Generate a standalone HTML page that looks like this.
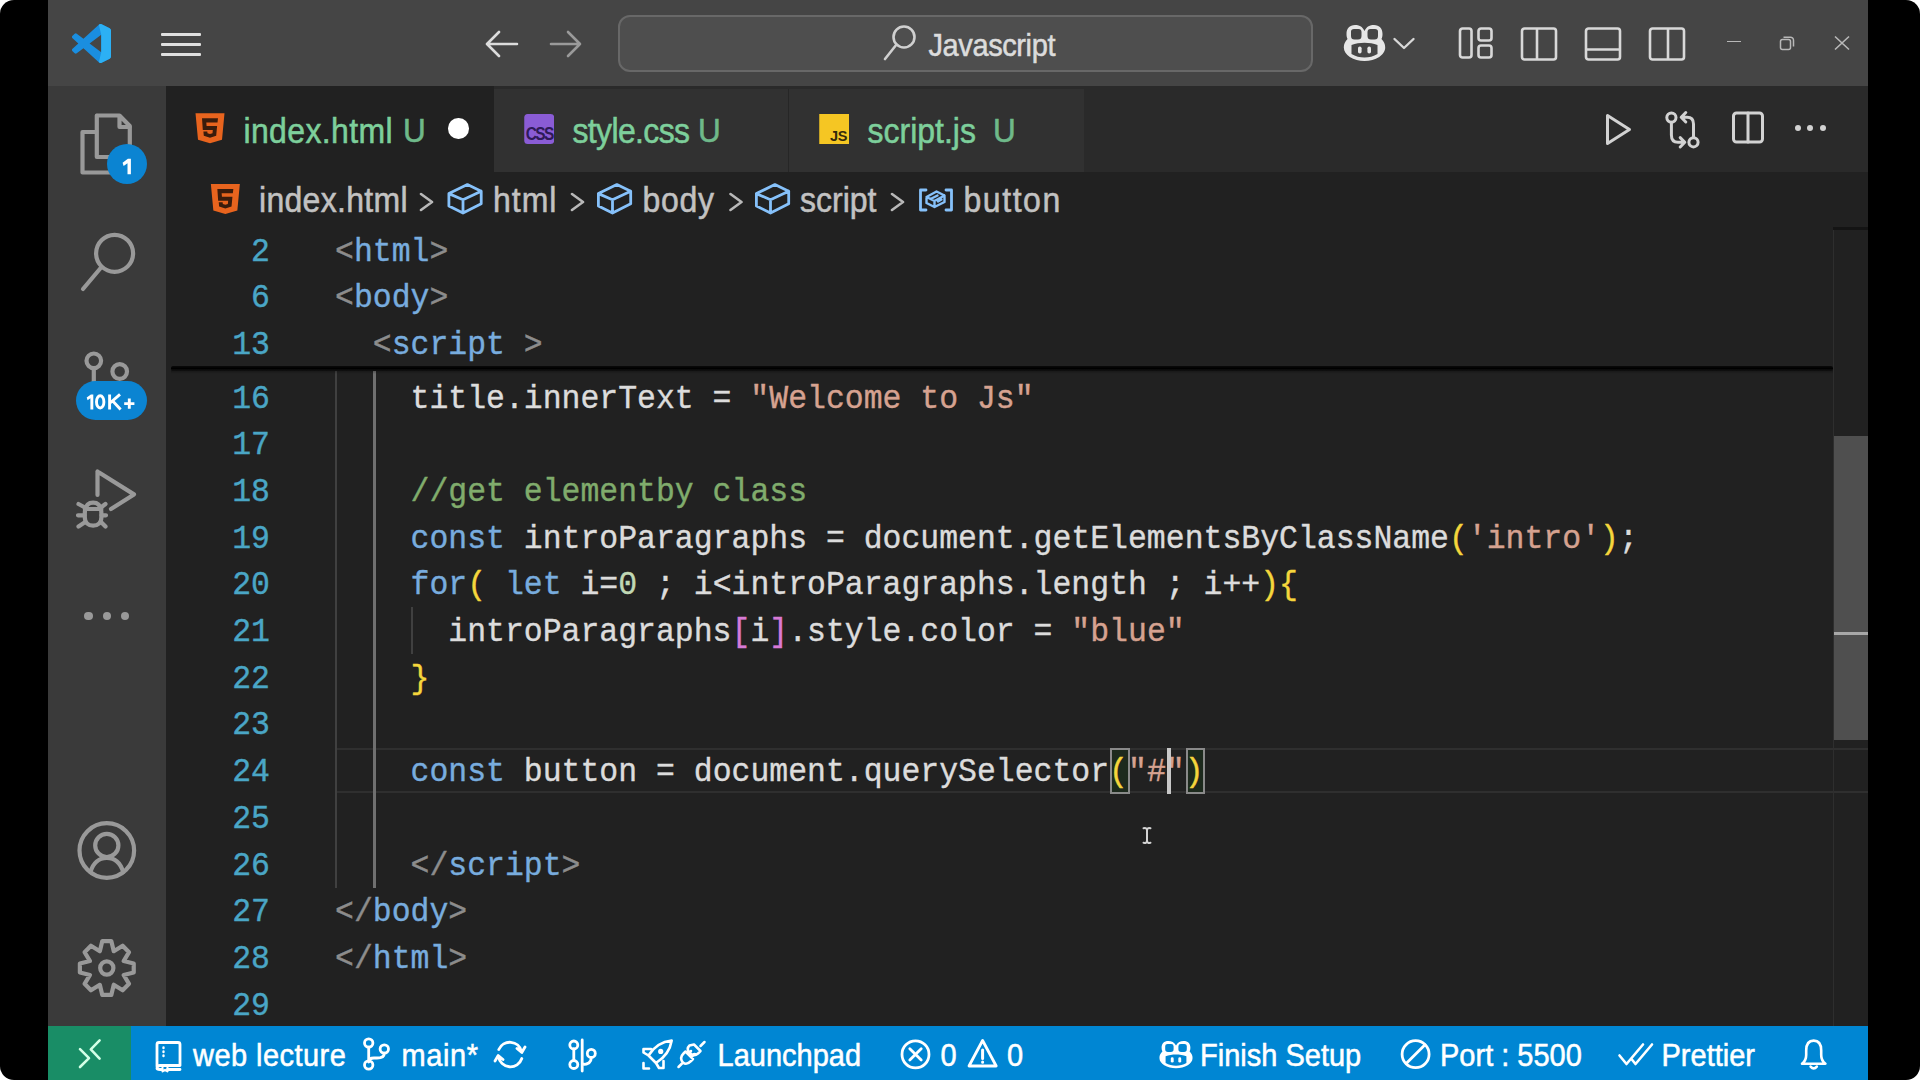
<!DOCTYPE html>
<html><head><meta charset="utf-8">
<style>
*{margin:0;padding:0;box-sizing:border-box}
html,body{width:1920px;height:1080px;overflow:hidden;background:#fff}
#frame{position:absolute;left:0;top:0;width:1920px;height:1080px;background:#000;border-radius:14px;overflow:hidden}
.abs{position:absolute}
#title{left:48px;top:0;width:1820px;height:86px;background:#454545}
#act{left:48px;top:86px;width:118px;height:940px;background:#3a3a3a}
#tabs{left:166px;top:86px;width:1702px;height:86px;background:#2a2a2a}
#crumbs{left:166px;top:172px;width:1702px;height:56px;background:#212121}
#editor{left:166px;top:228px;width:1702px;height:798px;background:#212121;overflow:hidden}
#status{left:48px;top:1026px;width:1820px;height:54px;background:#0086d3}
#remote{left:48px;top:1026px;width:83px;height:54px;background:#198d66}
.ui{font-family:"Liberation Sans",sans-serif;-webkit-text-stroke:0.5px currentColor}
.code{-webkit-text-stroke:0.4px currentColor;font-family:"Liberation Mono",monospace;font-size:34px;transform:scaleX(0.92535);transform-origin:0 0;white-space:pre;color:#dcdcdc;line-height:46.7px;height:46.7px}
.ln{-webkit-text-stroke:0.4px currentColor;font-family:"Liberation Mono",monospace;font-size:34px;transform:scaleX(0.92535);transform-origin:100% 0;color:#4aa6c6;text-align:right;width:120px;line-height:46.7px;height:46.7px}
.kw{color:#78acde}
.tg{color:#78acde}
.pu{color:#8c8c8c}
.st{color:#d6a290}
.cm{color:#80ac6c}
.nu{color:#c0d8b4}
.b1{color:#f5d63c}
.b2{color:#d87ad6}
.tab{position:absolute;top:0;height:86px}
.st1{top:1036px;font-size:29px;line-height:40px;color:#fff;white-space:pre;transform:scaleY(1.05);transform-origin:0 31px}
</style></head><body>
<div id="frame">
  <div id="title" class="abs"></div>
<svg class="abs" style="left:72px;top:23.5px" width="39" height="39" viewBox="0 0 100 100">
<path fill="#1a8ee0" d="M96.46 10.8L75.86.87a6.23 6.23 0 0 0-7.1 1.2L29.35 38.04 12.19 25.01a4.16 4.16 0 0 0-5.32.24l-5.5 5a4.17 4.17 0 0 0 0 6.16L16.26 50 1.37 63.58a4.17 4.17 0 0 0 0 6.16l5.5 5a4.16 4.16 0 0 0 5.32.24l17.16-13.03 39.41 35.970a6.22 6.22 0 0 0 7.1 1.2l20.6-9.92a6.25 6.25 0 0 0 3.54-5.63V16.43a6.25 6.25 0 0 0-3.54-5.630zM75.02 72.7L45.11 50l29.91-22.7v45.4z"/>
<path fill="#2cb0f4" d="M75.86.87L96.46 10.8A6.25 6.25 0 0 1 100 16.43V83.57A6.25 6.25 0 0 1 96.46 89.2L75.86 99.12A6.22 6.22 0 0 1 68.76 97.92L75.02 72.7V27.3L68.76 2.07A6.23 6.23 0 0 1 75.86.87Z"/>
</svg>
<div class="abs" style="left:161px;top:33px;width:40px;height:3px;background:#e0e0e0;border-radius:1px"></div>
<div class="abs" style="left:161px;top:43px;width:40px;height:3px;background:#e0e0e0;border-radius:1px"></div>
<div class="abs" style="left:161px;top:53px;width:40px;height:3px;background:#e0e0e0;border-radius:1px"></div>
<svg class="abs" style="left:484px;top:29px" width="36" height="30" viewBox="0 0 36 30" fill="none" stroke-width="2.6" stroke-linecap="round" stroke-linejoin="round">
<path stroke="#dcdcdc" d="M33 15H4M15 3L3 15L15 27"/>
</svg>
<svg class="abs" style="left:548px;top:29px" width="36" height="30" viewBox="0 0 36 30" fill="none" stroke-width="2.6" stroke-linecap="round" stroke-linejoin="round">
<path stroke="#9a9a9a" d="M3 15H32M20 3L32 15L20 27"/>
</svg>
<div class="abs" style="left:617.5px;top:14.5px;width:695px;height:57px;border:2px solid #686868;border-radius:12px;background:#4e4e4e"></div>
<svg class="abs" style="left:880px;top:22px" width="40" height="40" viewBox="0 0 40 40" fill="none" stroke="#d0d0d0" stroke-width="2.6" stroke-linecap="round">
<circle cx="24" cy="15" r="10.5"/><path d="M16.5 22.5L5 37"/>
</svg>
<div class="abs ui" style="left:928.5px;top:25.5px;font-size:29px;line-height:40px;color:#dcdcdc;white-space:pre;letter-spacing:-0.4px;transform:scaleY(1.06);transform-origin:0 30px">Javascript</div>
<svg class="abs" style="left:1343px;top:24px" width="43" height="38" viewBox="0 0 43 38">
<path fill="#e6e6e6" d="M21.5 7C19.5 2.5 16 1 12 1 6.5 1 3.5 4.5 3.5 10c0 2 .3 3.5 1 5C2 17.5 0.8 20 0.8 23.5c0 4 2.5 7 6 9.5C11 35.5 16 37 21.5 37S32 35.5 36.2 33c3.5-2.5 6-5.5 6-9.5 0-3.5-1.2-6-3.7-8.5.7-1.5 1-3 1-5C39.5 4.5 36.5 1 31 1 27 1 23.5 2.5 21.5 7Z"/>
<path fill="#454545" d="M8 7.5Q8 5 11 5H15.5Q18.5 5 18.5 8V12Q18.5 15.5 15 15.5H11.5Q8 15.5 8 12ZM24.5 8Q24.5 5 27.5 5H32Q35 5 35 7.5V12Q35 15.5 31.5 15.5H28Q24.5 15.5 24.5 12ZM8.5 21c4-1.5 8.5-2.2 13-2.2s9 .7 13 2.2V30c-4 2.5-8.5 3.5-13 3.5S12.5 32.5 8.5 30Z"/>
<rect x="15" y="22.5" width="3.6" height="7" rx="1.8" fill="#e6e6e6"/><rect x="24.4" y="22.5" width="3.6" height="7" rx="1.8" fill="#e6e6e6"/>
</svg>
<svg class="abs" style="left:1392px;top:36px" width="24" height="15" viewBox="0 0 24 15" fill="none" stroke="#d8d8d8" stroke-width="2.4" stroke-linecap="round" stroke-linejoin="round">
<path d="M2.5 3L12 12L21.5 3"/>
</svg>
<svg class="abs" style="left:1457px;top:26px" width="38" height="34" viewBox="0 0 38 34" fill="none" stroke="#d8d8d8" stroke-width="2.6">
<rect x="3" y="2.5" width="11.5" height="29" rx="2.5"/><rect x="21.5" y="2.5" width="13" height="12" rx="2.5"/><rect x="21.5" y="19.5" width="13" height="12" rx="2.5"/>
</svg>
<svg class="abs" style="left:1519px;top:26px" width="40" height="36" viewBox="0 0 40 36" fill="none" stroke="#d8d8d8" stroke-width="2.6">
<rect x="3" y="2.5" width="34" height="31" rx="2.5"/><path d="M18 2.5V33.5"/>
</svg>
<svg class="abs" style="left:1583px;top:26px" width="40" height="36" viewBox="0 0 40 36" fill="none" stroke="#d8d8d8" stroke-width="2.6">
<rect x="3" y="2.5" width="34" height="31" rx="2.5"/><path d="M3 23.5H37"/>
</svg>
<svg class="abs" style="left:1647px;top:26px" width="40" height="36" viewBox="0 0 40 36" fill="none" stroke="#d8d8d8" stroke-width="2.6">
<rect x="3" y="2.5" width="34" height="31" rx="2.5"/><path d="M21 2.5V33.5"/>
</svg>
<div class="abs" style="left:1727px;top:40.5px;width:14px;height:1.5px;background:#b8b8b8"></div>
<svg class="abs" style="left:1778px;top:34px" width="18" height="18" viewBox="0 0 18 18" fill="none" stroke="#b8b8b8" stroke-width="1.5">
<rect x="2.5" y="5.5" width="10" height="10" rx="2"/><path d="M5.5 3.2H12.5A3 3 0 0 1 15.5 6.2V12.5"/>
</svg>
<svg class="abs" style="left:1833px;top:35px" width="18" height="16" viewBox="0 0 18 16" fill="none" stroke="#b8b8b8" stroke-width="1.6">
<path d="M2 1.5L16 14.5M16 1.5L2 14.5"/>
</svg>

  <div id="act" class="abs"></div>
<svg class="abs" style="left:0;top:0" width="170" height="1026" viewBox="0 0 170 1026" fill="none" stroke="#999999" stroke-width="4.2" stroke-linejoin="round" stroke-linecap="round">
<path d="M97 115.5H119.5L129.8 126V156M96.8 115.5V157H124M119.5 116V127H130"/>
<path d="M95 132H82.5V172.5H112V160"/>
<circle cx="114.6" cy="253.3" r="18.5"/><path d="M101.5 267L83 289"/>
<circle cx="93.8" cy="360.8" r="7.3"/><circle cx="119.7" cy="371.5" r="7.3"/><path d="M93.8 368V382"/>
<path d="M97.5 471.5V495M97.5 471.5L134 494.4L111 509"/>
<path d="M84.8 509H101.4M84.8 514C84.8 506 88 502.6 93.1 502.6S101.4 506 101.4 514V517C101.4 523 98 525.7 93.1 525.7S84.8 523 84.8 517Z"/>
<path d="M78.5 504L84 507M105.5 504L101.5 507M78 515.3H84.5M106 515.3H101.5M78.5 526.5L84.5 522.5M105.5 526.5L101.5 522.5"/>
<circle cx="106.8" cy="850.5" r="27.3"/><circle cx="106.8" cy="845.4" r="11.6"/>
<path d="M90.5 872C93 863 99 857.8 106.8 857.8S120.5 863 123.2 872"/>
<path d="M102.29 941.07 L111.31 941.07 L113.76 951.19 L122.65 945.77 L129.03 952.15 L123.61 961.04 L133.73 963.49 L133.73 972.51 L123.61 974.96 L129.03 983.85 L122.65 990.23 L113.76 984.81 L111.31 994.93 L102.29 994.93 L99.84 984.81 L90.95 990.23 L84.57 983.85 L89.99 974.96 L79.87 972.51 L79.87 963.49 L89.99 961.04 L84.57 952.15 L90.95 945.77 L99.84 951.19Z"/><circle cx="106.8" cy="968" r="6.6"/>
</svg>
<div class="abs" style="left:107px;top:144px;width:40px;height:40px;border-radius:50%;background:#0b84d2"></div>
<svg class="abs" style="left:110px;top:150px" width="30" height="30" viewBox="110 150 30 30"><path fill="#fff" d="M122.6 162.8L127.9 158.8H130.9V174.2H127.5V163.2L123.6 165.9Z"/></svg>
<div class="abs" style="left:76.2px;top:380.7px;width:70.4px;height:39.3px;border-radius:20px;background:#0b84d2"></div>
<svg class="abs" style="left:80px;top:388px" width="60" height="26" viewBox="80 388 60 26"><path fill="#fff" d="M86.7 397.6L90.9 394.4H93.3V409.4H90.4V398.2L87.6 400.2Z"/><g fill="none" stroke="#fff" stroke-width="2.9"><ellipse cx="100.2" cy="401.9" rx="3.7" ry="6.1"/><path d="M109.6 394.4V409.4M120 394.4L110 403M112.5 400.8L120.6 409.4M129.3 398.4V408.8M124.2 403.6H134.4"/></g></svg>
<div class="abs" style="left:84.4px;top:612.2px;width:8.2px;height:8.2px;border-radius:50%;background:#999999"></div>
<div class="abs" style="left:102.7px;top:612.2px;width:8.2px;height:8.2px;border-radius:50%;background:#999999"></div>
<div class="abs" style="left:121.2px;top:612.2px;width:8.2px;height:8.2px;border-radius:50%;background:#999999"></div>

  <div id="tabs" class="abs"></div>
<div class="abs" style="left:166px;top:86px;width:328px;height:86px;background:#212121"></div>
<div class="abs" style="left:494px;top:88.5px;width:294px;height:83.5px;background:#313131"></div>
<div class="abs" style="left:788px;top:88.5px;width:1px;height:83.5px;background:#262626"></div>
<div class="abs" style="left:789px;top:88.5px;width:295px;height:83.5px;background:#313131"></div>
<svg class="abs" style="left:194.5px;top:113px" width="30" height="30.5" viewBox="0 0 30 30">
<path fill="#e8641e" d="M0.5 0H29.5L27 26.5L15 30L3 26.5Z"/>
<path fill="#3a1c0c" d="M7 5H23L22.5 9.3H11.3L11.6 12.7H22.1L21.2 22.6L15 24.6L8.8 22.6L8.4 18.2H12.3L12.5 20L15 20.8L17.5 20L17.8 16.8H7.8Z"/>
</svg>
<div class="abs ui" style="left:243.5px;top:109px;font-size:32px;line-height:46px;color:#7dcf9b;white-space:pre;letter-spacing:0.35px;transform:scaleY(1.12);transform-origin:0 34px">index.html</div>
<div class="abs ui" style="left:403px;top:109px;font-size:30px;line-height:46px;color:#6fb98a;white-space:pre;transform:scale(1.05,1.1);transform-origin:0 33px">U</div>
<div class="abs" style="left:448px;top:118px;width:20.5px;height:20.5px;border-radius:50%;background:#ffffff"></div>
<svg class="abs" style="left:523.5px;top:113.5px" width="30.5" height="30" viewBox="0 0 30 30">
<rect x="0" y="0" width="30" height="30" rx="3.5" fill="#8a5cd5"/>
<text x="28.5" y="25.5" text-anchor="end" font-family="Liberation Sans" font-weight="bold" font-size="15.5" fill="#2e1a58" letter-spacing="-1.6" transform="scale(1,1.15) translate(0,-3.3)">CSS</text>
</svg>
<div class="abs ui" style="left:572.5px;top:109px;font-size:32px;line-height:46px;color:#7dcf9b;white-space:pre;letter-spacing:-0.65px;transform:scaleY(1.12);transform-origin:0 34px">style.css</div>
<div class="abs ui" style="left:697.5px;top:109px;font-size:30px;line-height:46px;color:#6fb98a;white-space:pre;transform:scale(1.05,1.1);transform-origin:0 33px">U</div>
<svg class="abs" style="left:818.5px;top:113.5px" width="30.5" height="30" viewBox="0 0 30 30">
<rect x="0" y="0" width="30" height="30" fill="#f5c623"/>
<text x="28" y="26.5" text-anchor="end" font-family="Liberation Sans" font-weight="bold" font-size="14.5" fill="#33290c" letter-spacing="-0.3">JS</text>
</svg>
<div class="abs ui" style="left:867.5px;top:109px;font-size:32px;line-height:46px;color:#7dcf9b;white-space:pre;transform:scaleY(1.12);transform-origin:0 34px">script.js</div>
<div class="abs ui" style="left:993px;top:109px;font-size:30px;line-height:46px;color:#6fb98a;white-space:pre;transform:scale(1.05,1.1);transform-origin:0 33px">U</div>
<svg class="abs" style="left:1590px;top:100px" width="250" height="60" viewBox="1590 100 250 60" fill="none" stroke="#d2d2d2" stroke-width="3" stroke-linejoin="round" stroke-linecap="round">
<path d="M1607.5 115.5V143.5L1629.5 129.5Z"/>
<circle cx="1671.4" cy="117.6" r="4.6"/><circle cx="1693.5" cy="142.3" r="4.6"/>
<path d="M1671.4 122.3V135Q1671.4 142.3 1678 142.3H1684.5M1680.2 137.6L1684.8 142.3L1680.2 147"/>
<path d="M1693.5 137.6V124Q1693.5 117.2 1687 117.2H1681.5M1685.8 112.5L1681.2 117.2L1685.8 122"/>
<rect x="1733.5" y="113" width="29" height="29" rx="3"/><path d="M1748 113V142"/>
</svg>
<div class="abs" style="left:1795.3px;top:125.4px;width:6px;height:6px;border-radius:50%;background:#d2d2d2"></div>
<div class="abs" style="left:1807.4px;top:125.4px;width:6px;height:6px;border-radius:50%;background:#d2d2d2"></div>
<div class="abs" style="left:1819.7px;top:125.4px;width:6px;height:6px;border-radius:50%;background:#d2d2d2"></div>

  <div id="crumbs" class="abs"></div>
<svg class="abs" style="left:209.8px;top:183.5px" width="30.7" height="30" viewBox="0 0 30 30">
<path fill="#e8641e" d="M0.5 0H29.5L27 26.5L15 30L3 26.5Z"/>
<path fill="#3a1c0c" d="M7 5H23L22.5 9.3H11.3L11.6 12.7H22.1L21.2 22.6L15 24.6L8.8 22.6L8.4 18.2H12.3L12.5 20L15 20.8L17.5 20L17.8 16.8H7.8Z"/>
</svg>
<div class="abs ui" style="left:259px;top:178px;letter-spacing:0.3px;font-size:32px;line-height:46px;color:#c2c2c2;white-space:pre;transform:scaleY(1.1);transform-origin:0 34px">index.html</div>
<div class="abs ui" style="left:493px;top:178px;letter-spacing:1px;font-size:32px;line-height:46px;color:#c2c2c2;white-space:pre;transform:scaleY(1.1);transform-origin:0 34px">html</div>
<div class="abs ui" style="left:642.5px;top:178px;letter-spacing:0.7px;font-size:32px;line-height:46px;color:#c2c2c2;white-space:pre;transform:scaleY(1.1);transform-origin:0 34px">body</div>
<div class="abs ui" style="left:800px;top:178px;font-size:32px;line-height:46px;color:#c2c2c2;white-space:pre;transform:scaleY(1.1);transform-origin:0 34px">script</div>
<div class="abs ui" style="left:963.5px;top:178px;letter-spacing:1.55px;font-size:32px;line-height:46px;color:#c2c2c2;white-space:pre;transform:scaleY(1.1);transform-origin:0 34px">button</div>
<svg class="abs" style="left:0;top:170px" width="1100" height="58" viewBox="0 170 1100 58" fill="none" stroke-linejoin="round" stroke-linecap="round">
<g stroke="#b8b8b8" stroke-width="2.6">
<path d="M421 194L432 202L421 210M572 194L583 202L572 210M730.5 194L741.5 202L730.5 210M892 194L903 202L892 210"/>
</g>
<g stroke="#86c1fa" stroke-width="2.8">
<path d="M467.4 184.6L481.2 191.2V203.7L463 213L448.9 206V193.6ZM448.9 193.6L463 199.8L481.2 191.2M463 199.8V213"/>
<path d="M616.9 184.6L630.7 191.2V203.7L612.5 213L598.4 206V193.6ZM598.4 193.6L612.5 199.8L630.7 191.2M612.5 199.8V213"/>
<path d="M774.9 184.6L788.7 191.2V203.7L770.5 213L756.4 206V193.6ZM756.4 193.6L770.5 199.8L788.7 191.2M770.5 199.8V213"/>
<path d="M926 190H920.5V210H926M946 190H951.5V210H946"/>
<path d="M936.5 191.5L944.5 195.5V202L934.5 207L926.5 203V197ZM926.5 197L934.5 201L944.5 195.5M934.5 201V207M930.5 199L937.5 195.5M938 201.5L941.5 199.5" stroke-width="2.4"/>
</g>
</svg>

  <div id="editor" class="abs"></div>
<div class="abs" style="left:336px;top:748.2px;width:1532px;height:45.3px;border:2px solid #2f2f2f;border-right:none;border-left:none"></div>
<div class="abs" style="left:335px;top:368px;width:2px;height:519.6px;background:#404040"></div>
<div class="abs" style="left:372.8px;top:368px;width:3px;height:519.6px;background:#707070"></div>
<div class="abs" style="left:410.5px;top:607.4px;width:2px;height:46.7px;background:#404040"></div>
<div class="abs" style="left:1110.1px;top:747.5px;width:19.9px;height:46.7px;border:2px solid #8a8a8a;background:#1d2a1d"></div>
<div class="abs" style="left:1185.6px;top:747.5px;width:19.9px;height:46.7px;border:2px solid #8a8a8a;background:#1d2a1d"></div>
<div class="abs ln" style="top:375.5px;left:150px">16</div>
<div class="abs code" style="top:375.5px;left:334.8px">    title.innerText = <span class="st">"Welcome to Js"</span></div>
<div class="abs ln" style="top:422.2px;left:150px">17</div>
<div class="abs code" style="top:422.2px;left:334.8px"></div>
<div class="abs ln" style="top:468.9px;left:150px">18</div>
<div class="abs code" style="top:468.9px;left:334.8px">    <span class="cm">//get elementby class</span></div>
<div class="abs ln" style="top:515.6px;left:150px">19</div>
<div class="abs code" style="top:515.6px;left:334.8px">    <span class="kw">const</span> introParagraphs = document.getElementsByClassName<span class="b1">(</span><span class="st">'intro'</span><span class="b1">)</span>;</div>
<div class="abs ln" style="top:562.3px;left:150px">20</div>
<div class="abs code" style="top:562.3px;left:334.8px">    <span class="kw">for</span><span class="b1">(</span> <span class="kw">let</span> i=<span class="nu">0</span> ; i&lt;introParagraphs.length ; i++<span class="b1">)</span><span class="b1">{</span></div>
<div class="abs ln" style="top:609.0px;left:150px">21</div>
<div class="abs code" style="top:609.0px;left:334.8px">      introParagraphs<span class="b2">[</span>i<span class="b2">]</span>.style.color = <span class="st">"blue"</span></div>
<div class="abs ln" style="top:655.7px;left:150px">22</div>
<div class="abs code" style="top:655.7px;left:334.8px">    <span class="b1">}</span></div>
<div class="abs ln" style="top:702.4px;left:150px">23</div>
<div class="abs code" style="top:702.4px;left:334.8px"></div>
<div class="abs ln" style="top:749.1px;left:150px">24</div>
<div class="abs code" style="top:749.1px;left:334.8px">    <span class="kw">const</span> button = document.querySelector<span class="b1">(</span><span class="st">"#"</span><span class="b1">)</span></div>
<div class="abs ln" style="top:795.8px;left:150px">25</div>
<div class="abs code" style="top:795.8px;left:334.8px"></div>
<div class="abs ln" style="top:842.5px;left:150px">26</div>
<div class="abs code" style="top:842.5px;left:334.8px">    <span class="pu">&lt;/</span><span class="tg">script</span><span class="pu">&gt;</span></div>
<div class="abs ln" style="top:889.2px;left:150px">27</div>
<div class="abs code" style="top:889.2px;left:334.8px"><span class="pu">&lt;/</span><span class="tg">body</span><span class="pu">&gt;</span></div>
<div class="abs ln" style="top:935.9px;left:150px">28</div>
<div class="abs code" style="top:935.9px;left:334.8px"><span class="pu">&lt;/</span><span class="tg">html</span><span class="pu">&gt;</span></div>
<div class="abs ln" style="top:982.6px;left:150px">29</div>
<div class="abs code" style="top:982.6px;left:334.8px"></div>
<div class="abs" style="left:1166.7px;top:747.5px;width:4px;height:46.7px;background:#c8c8c8"></div>
<div class="abs" style="left:166px;top:228px;width:1668px;height:140px;background:#212121"></div>
<div class="abs ln" style="top:228.6px;left:150px">2</div>
<div class="abs code" style="top:228.6px;left:334.8px"><span class="pu">&lt;</span><span class="tg">html</span><span class="pu">&gt;</span></div>
<div class="abs ln" style="top:275.3px;left:150px">6</div>
<div class="abs code" style="top:275.3px;left:334.8px"><span class="pu">&lt;</span><span class="tg">body</span><span class="pu">&gt;</span></div>
<div class="abs ln" style="top:322.0px;left:150px">13</div>
<div class="abs code" style="top:322.0px;left:334.8px">  <span class="pu">&lt;</span><span class="tg">script</span> <span class="pu">&gt;</span></div>
<div class="abs" style="left:171px;top:365.5px;width:1662px;height:5px;background:linear-gradient(#0a0a0a 0%,#000 50%,#1a1a1a 100%);border-radius:2px"></div>
<div class="abs" style="left:171px;top:370px;width:1662px;height:4px;background:linear-gradient(rgba(0,0,0,0.35),rgba(0,0,0,0))"></div>
<div class="abs" style="left:1833px;top:227px;width:1px;height:799px;background:#2e2e2e"></div>
<div class="abs" style="left:1833px;top:227px;width:35px;height:3px;background:#141414"></div>
<div class="abs" style="left:1834px;top:436px;width:34px;height:304px;background:#4f4f4f"></div>
<div class="abs" style="left:1834px;top:632px;width:34px;height:3px;background:#a8a8a8"></div>
<svg class="abs" style="left:1130px;top:820px" width="30" height="30" viewBox="1130 820 30 30" fill="none" stroke="#d4d4d4" stroke-width="2" stroke-linecap="round"><path d="M1143.5 828.3Q1147 827.3 1147 830.5V840.5Q1147 843.5 1143.5 842.8M1150.5 828.3Q1147 827.3 1147 830.5M1147 840.5Q1147 843.5 1150.5 842.8"/></svg>
  <div id="status" class="abs"></div>
  <div id="remote" class="abs"></div>
<svg class="abs" style="left:0;top:1026px" width="1868" height="54" viewBox="0 1026 1868 54" fill="none" stroke-linejoin="round" stroke-linecap="round">
<path d="M80 1049.2L89 1058.1L80 1067M99.6 1040.4L90.8 1049.3L99.6 1058.6" stroke="#d2ffe6" stroke-width="2.6"/>
<g stroke="#ffffff" stroke-width="2.8">
<path d="M157 1066.5V1044.5Q157 1042.5 159 1042.5H178Q180 1042.5 180 1044.5V1065.5H160Q157 1065.5 157 1068.5Q157 1069.5 160 1069.5H162M167.5 1069.5H180"/>
<path d="M163.5 1047.5V1048M163.5 1051.5V1052M163.5 1055.5V1056" stroke-width="2.4"/>
<path d="M162.5 1065.5V1071.5L165 1069.8L167.5 1071.5V1065.5" stroke-width="2"/>
<circle cx="368.7" cy="1043" r="4.2"/><circle cx="368.7" cy="1065" r="4.2"/><circle cx="384.3" cy="1049" r="4.2"/>
<path d="M368.7 1047.2V1060.8M384.3 1053.2Q384.3 1058 377 1058H374Q368.7 1058 368.7 1062"/>
<path d="M498.8 1049.5A12 12 0 0 1 521.5 1051.5M521.8 1058.5A12 12 0 0 1 498.5 1056.5M517 1048.5L521.8 1052.5L525 1047M503 1059.5L498.2 1055.5L495 1061"/>
<circle cx="573.8" cy="1045" r="4"/><circle cx="573.8" cy="1064.5" r="4"/><circle cx="591.3" cy="1053.4" r="4"/>
<path d="M573.8 1049V1060.5M582.2 1040V1071M591.3 1057.4Q591.3 1064.5 582.2 1064.5"/>
<path d="M671.7 1040.5Q657 1042 648.5 1055.5L656 1063Q669.5 1054.5 671.7 1040.5ZM651 1049H643.5V1052.5L648.5 1055.5M656 1063L659 1068H663.5V1061" stroke-width="2.6"/>
<circle cx="660.7" cy="1051.4" r="2.6" fill="#fff" stroke="none"/>
<path d="M643.5 1063V1068.5H649" stroke-width="2.6"/>
<path d="M678.5 1067L683 1062.5M683 1062.5Q679 1058 683.5 1053.5L685.5 1051.5L693 1059L691 1061Q686.5 1065.5 683 1062.5M688 1054L691 1051M691.5 1057L694.5 1054M694 1044.5L700.5 1051L698 1053.5Q694 1057 690.5 1053.5L689.5 1052.5Q686 1049 689.5 1045.5ZM700.5 1046L704.5 1042" stroke-width="2.5"/>
<circle cx="915.5" cy="1054.4" r="13.5"/><path d="M909.8 1048.7L921.2 1060.1M921.2 1048.7L909.8 1060.1"/>
<path d="M982.6 1040.5L969 1066H996.2Z"/><path d="M982.6 1050V1058.5M982.6 1062V1062.3" stroke-width="3"/>
<circle cx="1415.6" cy="1054.2" r="13.5"/><path d="M1425 1044.8L1406.2 1063.6"/>
<path d="M1619.5 1055.5L1626.5 1064L1643 1044.5M1631.5 1059L1635.5 1064L1652 1044.5" stroke-width="2.6"/>
<path d="M1802 1063.8Q1806.2 1060.5 1806.2 1055V1050.5Q1806.2 1040.6 1813.7 1040.6T1821.2 1050.5V1055Q1821.2 1060.5 1825.4 1063.8ZM1810.6 1066.6Q1813.7 1070.2 1816.8 1066.6" stroke-width="2.6"/>
</g>
<g fill="#ffffff" transform="translate(1158.8 1040.2) scale(0.80 0.76)">
<path d="M21.5 7C19.5 2.5 16 1 12 1 6.5 1 3.5 4.5 3.5 10c0 2 .3 3.5 1 5C2 17.5 0.8 20 0.8 23.5c0 4 2.5 7 6 9.5C11 35.5 16 37 21.5 37S32 35.5 36.2 33c3.5-2.5 6-5.5 6-9.5 0-3.5-1.2-6-3.7-8.5.7-1.5 1-3 1-5C39.5 4.5 36.5 1 31 1 27 1 23.5 2.5 21.5 7Z"/>
</g>
<g fill="#0086d3" transform="translate(1158.8 1040.2) scale(0.80 0.76)">
<path d="M8 7.5Q8 5 11 5H15.5Q18.5 5 18.5 8V12Q18.5 15.5 15 15.5H11.5Q8 15.5 8 12ZM24.5 8Q24.5 5 27.5 5H32Q35 5 35 7.5V12Q35 15.5 31.5 15.5H28Q24.5 15.5 24.5 12ZM8.5 21c4-1.5 8.5-2.2 13-2.2s9 .7 13 2.2V30c-4 2.5-8.5 3.5-13 3.5S12.5 32.5 8.5 30Z"/>
</g>
<g fill="#ffffff" transform="translate(1158.8 1040.2) scale(0.80 0.76)"><rect x="15" y="22.5" width="3.6" height="7" rx="1.8"/><rect x="24.4" y="22.5" width="3.6" height="7" rx="1.8"/></g>
</svg>
<div class="abs ui st1" style="left:193px;letter-spacing:0.45px">web lecture</div>
<div class="abs ui st1" style="left:401.5px;letter-spacing:0.6px">main*</div>
<div class="abs ui st1" style="left:717.5px">Launchpad</div>
<div class="abs ui st1" style="left:940.5px">0</div>
<div class="abs ui st1" style="left:1007px">0</div>
<div class="abs ui st1" style="left:1200px">Finish Setup</div>
<div class="abs ui st1" style="left:1440px">Port : 5500</div>
<div class="abs ui st1" style="left:1661.5px">Prettier</div>

</div>
</body></html>
